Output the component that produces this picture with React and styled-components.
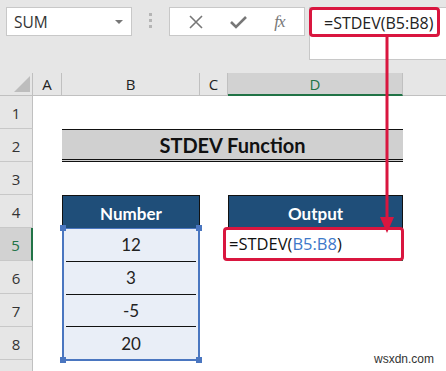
import styled, { createGlobalStyle } from 'styled-components';

const GlobalStyle = createGlobalStyle`
    body {
        margin: 0;
        background: #fff;
    }
`;

const Page = styled.div`
    position: relative;
    width: 446px;
    height: 371px;
    overflow: hidden;
    background: #fff;
    font-family: Lato, "Open Sans", sans-serif;
    color: #222;
`;

const Toolbar = styled.div`
    display: flex;
    align-items: flex-start;
    height: 73px;
    box-sizing: border-box;
    padding: 7px 0 0 6px;
    background: #e6e6e6;
`;

const NameBox = styled.div`
    display: flex;
    align-items: center;
    justify-content: space-between;
    box-sizing: border-box;
    width: 126px;
    height: 29px;
    padding: 0 8px 0 7px;
    background: #fff;
    border: 1px solid #c8c8c8;
    font-family: "Open Sans", sans-serif;
    font-size: 15.5px;
    color: #333;
`;

const Caret = styled.span`
    width: 0;
    height: 0;
    border-left: 4px solid transparent;
    border-right: 4px solid transparent;
    border-top: 4px solid #777;
`;

const Grip = styled.div`
    display: flex;
    flex-direction: column;
    gap: 3px;
    margin: 6px 17px 0 17px;
    span {
        width: 3px;
        height: 3px;
        background: #b5b5b5;
    }
`;

const FxBox = styled.div`
    display: flex;
    align-items: center;
    justify-content: space-around;
    box-sizing: border-box;
    width: 136px;
    height: 29px;
    padding: 0 6px;
    background: #fff;
    border: 1px solid #c8c8c8;
`;

const FxLabel = styled.span`
    font-family: "Liberation Serif", serif;
    font-style: italic;
    font-size: 17px;
    color: #777;
    letter-spacing: -1px;
`;

const FormulaInput = styled.div`
    position: relative;
    flex: 1;
    box-sizing: border-box;
    height: 53px;
    margin-left: 4px;
    padding: 4px 0 0 14px;
    background: #fff;
    border: 1px solid #c8c8c8;
    border-right: none;
    font-family: "Open Sans", sans-serif;
    font-size: 16px;
    color: #222;
`;

const Callout = styled.div`
    position: absolute;
    left: ${p => p.$l}px;
    top: ${p => p.$t}px;
    right: ${p => p.$r}px;
    bottom: ${p => p.$b}px;
    border: 3px solid #d9163f;
    border-radius: 4px;
    pointer-events: none;
`;

const Sheet = styled.div`
    display: grid;
    grid-template-columns: 33px 29px 138px 28px 175px 1fr;
    grid-template-rows: 23px repeat(9, 33px);
`;

const ColHead = styled.div`
    display: flex;
    align-items: center;
    justify-content: center;
    box-sizing: border-box;
    background: ${p => (p.$active ? '#d2d2d2' : '#e6e6e6')};
    border-right: ${p => (p.$last ? 'none' : '1px solid #c0c0c0')};
    border-bottom: ${p => (p.$active ? '2px solid #217346' : '1px solid #c0c0c0')};
    font-family: "Open Sans", sans-serif;
    font-size: 15px;
    color: ${p => (p.$active ? '#217346' : '#222')};
`;

const Corner = styled(ColHead)`
    align-items: flex-end;
    justify-content: flex-end;
    padding: 0 2px 3px 0;
    &::after {
        content: '';
        width: 0;
        height: 0;
        border-left: 16px solid transparent;
        border-bottom: 16px solid #bdbdbd;
    }
`;

const RowHead = styled.div`
    grid-column: 1;
    grid-row: ${p => p.$row};
    display: flex;
    align-items: center;
    justify-content: center;
    box-sizing: border-box;
    padding-top: 2px;
    background: ${p => (p.$active ? '#d2d2d2' : '#e6e6e6')};
    border-right: ${p => (p.$active ? '2px solid #217346' : '1px solid #c0c0c0')};
    border-bottom: 1px solid #c8c8c8;
    font-family: "Open Sans", sans-serif;
    font-size: 15px;
    color: ${p => (p.$active ? '#217346' : '#333')};
`;

const Title = styled.div`
    grid-column: 3 / 6;
    grid-row: 3;
    display: flex;
    align-items: center;
    justify-content: center;
    background: #d0d0d0;
    border-top: 1px solid #111;
    border-bottom: 3px double #111;
    font-size: 20px;
    font-weight: 700;
    color: #111;
`;

const HeaderCell = styled.div`
    grid-column: ${p => p.$col};
    grid-row: 5;
    display: flex;
    align-items: center;
    justify-content: center;
    padding-top: 2px;
    background: #1f4e79;
    border: 1px solid #111;
    border-bottom: none;
    font-size: 17px;
    font-weight: 700;
    color: #fff;
`;

const Range = styled.div`
    position: relative;
    grid-column: 3;
    grid-row: 6 / 10;
    display: flex;
    flex-direction: column;
    background: #e9eef7;
    border: 2px solid #4a76c0;
    border-top-width: 1px;
    margin-bottom: -1px;
`;

const Handle = styled.span`
    position: absolute;
    width: 6px;
    height: 6px;
    background: #4a76c0;
    ${p => (p.$top ? 'top: -4px;' : 'bottom: -4px;')}
    ${p => (p.$left ? 'left: -4px;' : 'right: -4px;')}
`;

const ValueCell = styled.div`
    flex: 1;
    display: flex;
    align-items: center;
    justify-content: center;
    border-top: ${p => (p.$first ? 'none' : '1px solid #111')};
    margin: 0 2px;
    font-size: 17px;
    color: #222;
`;

const OutputCell = styled.div`
    position: relative;
    grid-column: 5;
    grid-row: 6;
    display: flex;
    align-items: center;
    box-sizing: border-box;
    padding-left: 1px;
    border-bottom: 2px solid #217346;
    font-family: "Open Sans", sans-serif;
    font-size: 16.5px;
    color: #111;
`;

const Ref = styled.span`
    color: #3d78c9;
`;

const Arrow = styled.svg`
    position: absolute;
    left: 378px;
    top: 36px;
`;

const Watermark = styled.div`
    position: absolute;
    right: 12px;
    bottom: 5px;
    font-family: "Liberation Sans", sans-serif;
    font-size: 12px;
    color: #333;
`;

const rows = [1, 2, 3, 4, 5, 6, 7, 8, 9];
const values = ['12', '3', '-5', '20'];

export default function App() {
    return (
        <Page>
            <GlobalStyle />
            <Toolbar>
                <NameBox>
                    SUM
                    <Caret />
                </NameBox>
                <Grip>
                    <span />
                    <span />
                    <span />
                </Grip>
                <FxBox>
                    <svg width="14" height="14" viewBox="0 0 14 14">
                        <path d="M1 1 L13 13 M13 1 L1 13" stroke="#777" strokeWidth="1.6" />
                    </svg>
                    <svg width="17" height="14" viewBox="0 0 17 14">
                        <path d="M1 7 L6 12 L16 2" stroke="#777" strokeWidth="2.6" fill="none" />
                    </svg>
                    <FxLabel>fx</FxLabel>
                </FxBox>
                <FormulaInput>
                    =STDEV(B5:B8)
                    <Callout $l={-1} $t={-1} $r={6} $b={22} />
                </FormulaInput>
            </Toolbar>
            <Sheet>
                <Corner />
                <ColHead>A</ColHead>
                <ColHead>B</ColHead>
                <ColHead>C</ColHead>
                <ColHead $active>D</ColHead>
                <ColHead $last />
                {rows.map(r => (
                    <RowHead key={r} $row={r + 1} $active={r === 5}>
                        {r < 9 ? r : ''}
                    </RowHead>
                ))}
                <Title>STDEV Function</Title>
                <HeaderCell $col={3}>Number</HeaderCell>
                <HeaderCell $col={5}>Output</HeaderCell>
                <Range>
                    {values.map((v, i) => (
                        <ValueCell key={v} $first={i === 0}>{v}</ValueCell>
                    ))}
                    <Handle $top $left />
                    <Handle $top />
                    <Handle $left />
                    <Handle />
                </Range>
                <OutputCell>
                    =STDEV(<Ref>B5:B8</Ref>)
                    <Callout $l={-5} $t={-1} $r={-1} $b={-2} />
                </OutputCell>
            </Sheet>
            <Arrow width="18" height="200" viewBox="0 0 18 200">
                <line x1="9" y1="0" x2="9" y2="184" stroke="#d9163f" strokeWidth="3" />
                <path d="M2 181 L16 181 L9 197 Z" fill="#d9163f" />
            </Arrow>
            <Watermark>wsxdn.com</Watermark>
        </Page>
    );
}
